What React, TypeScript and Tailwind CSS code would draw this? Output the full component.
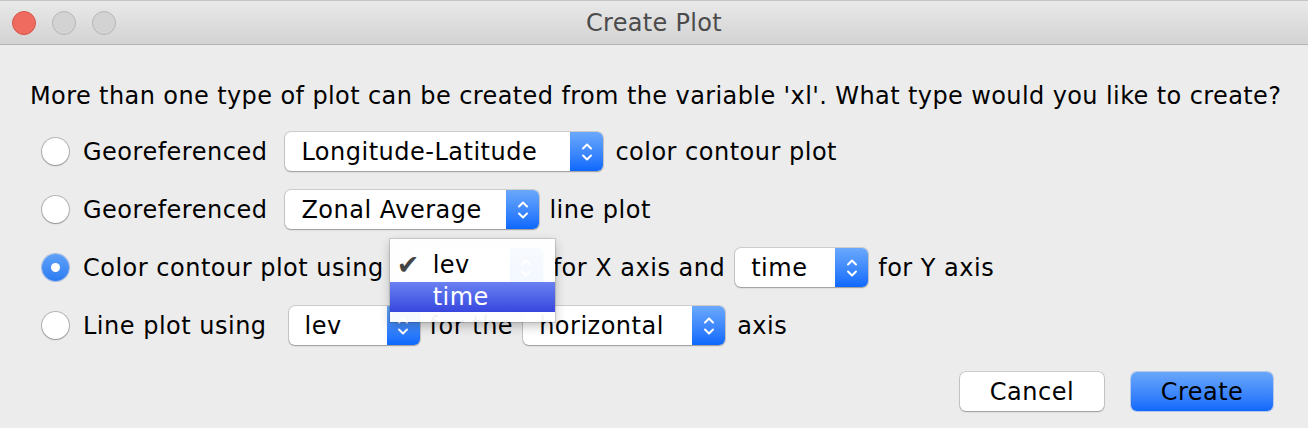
import type { ReactNode } from 'react';

const font = "font-['DejaVu_Sans','Liberation_Sans',sans-serif]";

function Chevrons() {
  return (
    <svg width="14" height="24" viewBox="0 0 14 24" fill="none" stroke="white" strokeWidth="2" strokeLinecap="round" strokeLinejoin="round">
      <path d="M3 8.5 L7 4.5 L11 8.5" />
      <path d="M3 15.5 L7 19.5 L11 15.5" />
    </svg>
  );
}

function Select({ value, width, hidden = false, children }: { value: string; width: string; hidden?: boolean; children?: ReactNode }) {
  return (
    <div className={`relative flex h-[39px] ${width} shrink-0 items-stretch rounded-[6px] bg-white shadow-[0_0_0_1px_rgba(0,0,0,0.13),0_1px_1.5px_rgba(0,0,0,0.25)]`}>
      <div className={`flex flex-1 items-center pl-[16px] text-black ${hidden ? 'invisible' : ''}`}>{value}</div>
      <div className="flex w-[33px] items-center justify-center rounded-r-[6px] bg-gradient-to-b from-[#6aa8fb] to-[#0a68fc]">
        <Chevrons />
      </div>
      {children}
    </div>
  );
}

function Radio({ checked = false }: { checked?: boolean }) {
  if (checked) {
    return (
      <div className="flex h-[27px] w-[27px] shrink-0 items-center justify-center rounded-full bg-gradient-to-b from-[#5ea1f8] to-[#2b7cf2] shadow-[0_0_0_1px_rgba(30,90,200,0.35)]">
        <div className="h-[9px] w-[9px] rounded-full bg-white" />
      </div>
    );
  }
  return <div className="h-[27px] w-[27px] shrink-0 rounded-full bg-white shadow-[0_0_0_1px_rgba(0,0,0,0.22),0_1px_1.5px_rgba(0,0,0,0.2)]" />;
}

function Popup() {
  return (
    <div className="absolute left-[-20px] top-[-9px] z-10 w-[165px] bg-white/95 pb-[10px] pt-[8px] shadow-[0_0_0_1px_rgba(0,0,0,0.12),0_4px_10px_rgba(0,0,0,0.25)]">
      <div className="flex h-[35px] items-center">
        <span className="w-[43px] pl-[7px] text-[27px] leading-none text-[#444]">✔</span>
        <span className="text-black">lev</span>
      </div>
      <div className="flex h-[30px] items-center bg-gradient-to-b from-[#6b80f1] to-[#3845de] pl-[43px] text-white">time</div>
    </div>
  );
}

export default function App() {
  return (
    <div className={`h-[428px] w-[1308px] overflow-hidden whitespace-nowrap bg-[#ececec] text-[24px] tracking-[0.5px] ${font}`}>
      <div className="relative flex h-[45px] items-center border-b border-t border-b-[#b4b4b4] border-t-[#c4c4c4] bg-gradient-to-b from-[#e9e9e9] to-[#d3d3d3] pl-[12px]">
        <div className="flex gap-[16px]">
          <div className="h-[24px] w-[24px] rounded-full border border-[#d4574b] bg-[#ef6b5f]" />
          <div className="h-[24px] w-[24px] rounded-full border border-[#b7b7b7] bg-[#d3d3d3]" />
          <div className="h-[24px] w-[24px] rounded-full border border-[#b7b7b7] bg-[#d3d3d3]" />
        </div>
        <div className="absolute inset-0 flex items-center justify-center tracking-[0.3px] text-[#4b4b4b]">Create Plot</div>
      </div>

      <div className="pl-[30px] pt-[37px] leading-[28px] tracking-[0.4px] text-black">
        More than one type of plot can be created from the variable 'xl'. What type would you like to create?
      </div>

      <div className="mt-[22px] flex flex-col gap-[19px] pl-[42px] text-black">
        <div className="flex h-[39px] items-center">
          <Radio />
          <span className="ml-[14px]">Georeferenced</span>
          <div className="ml-[18px]">
            <Select value="Longitude-Latitude" width="w-[318px]" />
          </div>
          <span className="ml-[12px]">color contour plot</span>
        </div>
        <div className="flex h-[39px] items-center">
          <Radio />
          <span className="ml-[14px]">Georeferenced</span>
          <div className="ml-[18px]">
            <Select value="Zonal Average" width="w-[254px]" />
          </div>
          <span className="ml-[10px]">line plot</span>
        </div>
        <div className="relative z-10 flex h-[39px] items-center">
          <Radio checked />
          <span className="ml-[14px]">Color contour plot using</span>
          <div className="ml-[26px]">
            <Select value="lev" width="w-[133px]" hidden>
              <Popup />
            </Select>
          </div>
          <span className="ml-[10px]">for X axis and</span>
          <div className="ml-[10px]">
            <Select value="time" width="w-[133px]" />
          </div>
          <span className="ml-[10px]">for Y axis</span>
        </div>
        <div className="flex h-[39px] items-center">
          <Radio />
          <span className="ml-[14px]">Line plot using</span>
          <div className="ml-[22px]">
            <Select value="lev" width="w-[131px]" />
          </div>
          <span className="ml-[10px]">for the</span>
          <div className="ml-[10px]">
            <Select value="horizontal" width="w-[202px]" />
          </div>
          <span className="ml-[12px]">axis</span>
        </div>
      </div>

      <div className="mt-[27px] flex justify-end gap-[27px] pr-[35px]">
        <button className="h-[39px] w-[144px] rounded-[6px] bg-white text-black shadow-[0_0_0_1px_rgba(0,0,0,0.13),0_1px_1.5px_rgba(0,0,0,0.25)]">Cancel</button>
        <button className="h-[39px] w-[142px] rounded-[6px] bg-gradient-to-b from-[#6aa7fb] to-[#1068fb] text-black shadow-[0_0_0_1px_rgba(20,90,220,0.25)]">Create</button>
      </div>
    </div>
  );
}
